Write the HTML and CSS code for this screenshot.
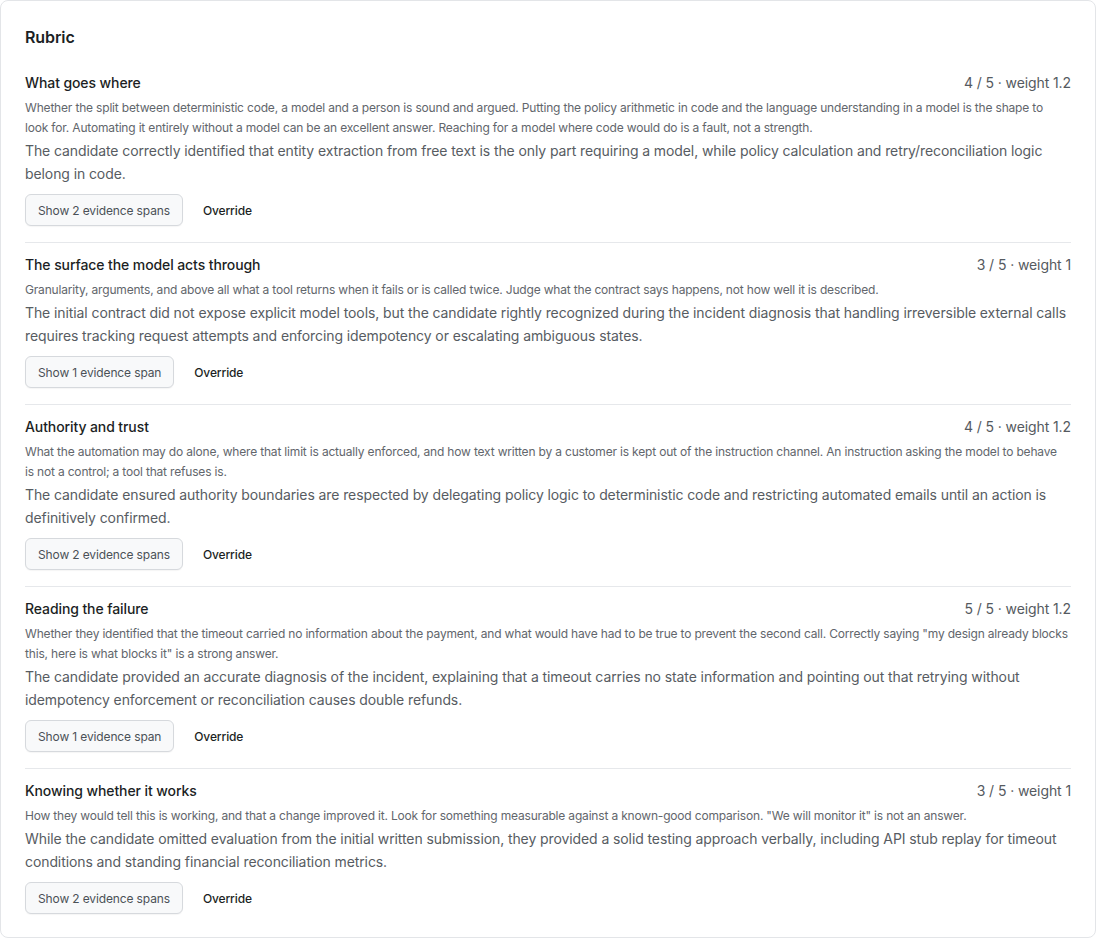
FILE: index.html
```html
<!DOCTYPE html>
<html>
<head>
<meta charset="utf-8">
<link rel="stylesheet" href="styles.css">
</head>
<body>
<div class="card">
  <h2 class="heading">Rubric</h2>
  <div class="list">
    <div class="item">
      <div class="row"><div class="name">What goes where</div><div class="score">4 / 5 · weight 1.2</div></div>
      <p class="desc">Whether the split between deterministic code, a model and a person is sound and argued. Putting the policy arithmetic in code and the language understanding in a model is the shape to look for. Automating it entirely without a model can be an excellent answer. Reaching for a model where code would do is a fault, not a strength.</p>
      <p class="rationale">The candidate correctly identified that entity extraction from free text is the only part requiring a model, while policy calculation and retry/reconciliation logic belong in code.</p>
      <div class="actions"><button class="btn">Show 2 evidence spans</button><button class="ghost">Override</button></div>
    </div>
    <div class="item">
      <div class="row"><div class="name">The surface the model acts through</div><div class="score">3 / 5 · weight 1</div></div>
      <p class="desc">Granularity, arguments, and above all what a tool returns when it fails or is called twice. Judge what the contract says happens, not how well it is described.</p>
      <p class="rationale">The initial contract did not expose explicit model tools, but the candidate rightly recognized during the incident diagnosis that handling irreversible external calls requires tracking request attempts and enforcing idempotency or escalating ambiguous states.</p>
      <div class="actions"><button class="btn">Show 1 evidence span</button><button class="ghost">Override</button></div>
    </div>
    <div class="item">
      <div class="row"><div class="name">Authority and trust</div><div class="score">4 / 5 · weight 1.2</div></div>
      <p class="desc">What the automation may do alone, where that limit is actually enforced, and how text written by a customer is kept out of the instruction channel. An instruction asking the model to behave is not a control; a tool that refuses is.</p>
      <p class="rationale">The candidate ensured authority boundaries are respected by delegating policy logic to deterministic code and restricting automated emails until an action is definitively confirmed.</p>
      <div class="actions"><button class="btn">Show 2 evidence spans</button><button class="ghost">Override</button></div>
    </div>
    <div class="item">
      <div class="row"><div class="name">Reading the failure</div><div class="score">5 / 5 · weight 1.2</div></div>
      <p class="desc">Whether they identified that the timeout carried no information about the payment, and what would have had to be true to prevent the second call. Correctly saying "my design already blocks this, here is what blocks it" is a strong answer.</p>
      <p class="rationale">The candidate provided an accurate diagnosis of the incident, explaining that a timeout carries no state information and pointing out that retrying without idempotency enforcement or reconciliation causes double refunds.</p>
      <div class="actions"><button class="btn">Show 1 evidence span</button><button class="ghost">Override</button></div>
    </div>
    <div class="item">
      <div class="row"><div class="name">Knowing whether it works</div><div class="score">3 / 5 · weight 1</div></div>
      <p class="desc">How they would tell this is working, and that a change improved it. Look for something measurable against a known-good comparison. "We will monitor it" is not an answer.</p>
      <p class="rationale">While the candidate omitted evaluation from the initial written submission, they provided a solid testing approach verbally, including API stub replay for timeout conditions and standing financial reconciliation metrics.</p>
      <div class="actions"><button class="btn">Show 2 evidence spans</button><button class="ghost">Override</button></div>
    </div>
  </div>
</div>
</body>
</html>
```

FILE: styles.css
```css
* { box-sizing: border-box; }
html, body { margin: 0; padding: 0; background: #ffffff; }
body {
  font-family: Inter, "Noto Sans", "Liberation Sans", sans-serif;
  color: #1f2328;
  letter-spacing: -0.006em;
}
.card {
  border: 1px solid #e3e5e8;
  border-radius: 8px;
  padding: 24px 24px 23px;
  min-height: 938px;
}
.heading {
  margin: 0;
  font-size: 16px;
  line-height: 24px;
  font-weight: 600;
  color: #1c1f24;
}
.list {
  margin-top: 12px;
  display: flex;
  flex-direction: column;
}
.item {
  padding: 12px 0 16px;
  border-bottom: 1px solid #e6e8eb;
}
.item:last-child { border-bottom: none; padding-bottom: 0; }
.row {
  display: flex;
  justify-content: space-between;
  align-items: baseline;
}
.name {
  font-size: 14px;
  line-height: 20px;
  font-weight: 500;
  color: #1c1f24;
}
.score {
  font-size: 14px;
  line-height: 20px;
  color: #555a60;
}
.desc {
  margin: 5px 0 0;
  padding-right: 3px;
  font-size: 12px;
  line-height: 20px;
  letter-spacing: -0.015em;
  color: #62666c;
}
.rationale {
  margin: 1px 0 0;
  font-size: 14px;
  line-height: 23px;
  color: #575c62;
}
.actions {
  margin-top: 9px;
  display: flex;
  align-items: center;
  gap: 4px;
}
.btn {
  font-family: inherit;
  letter-spacing: -0.011em;
  font-size: 12px;
  height: 32px;
  padding: 0 12px;
  border: 1px solid #d6d9dd;
  border-radius: 6px;
  background: #f8f9fa;
  color: #4b5157;
  box-shadow: 0 1px 1px rgba(0,0,0,0.04);
}
.ghost {
  font-family: inherit;
  letter-spacing: -0.011em;
  font-size: 12px;
  font-weight: 500;
  height: 32px;
  padding: 0 16px;
  border: none;
  background: transparent;
  color: #1c1f24;
}
```
